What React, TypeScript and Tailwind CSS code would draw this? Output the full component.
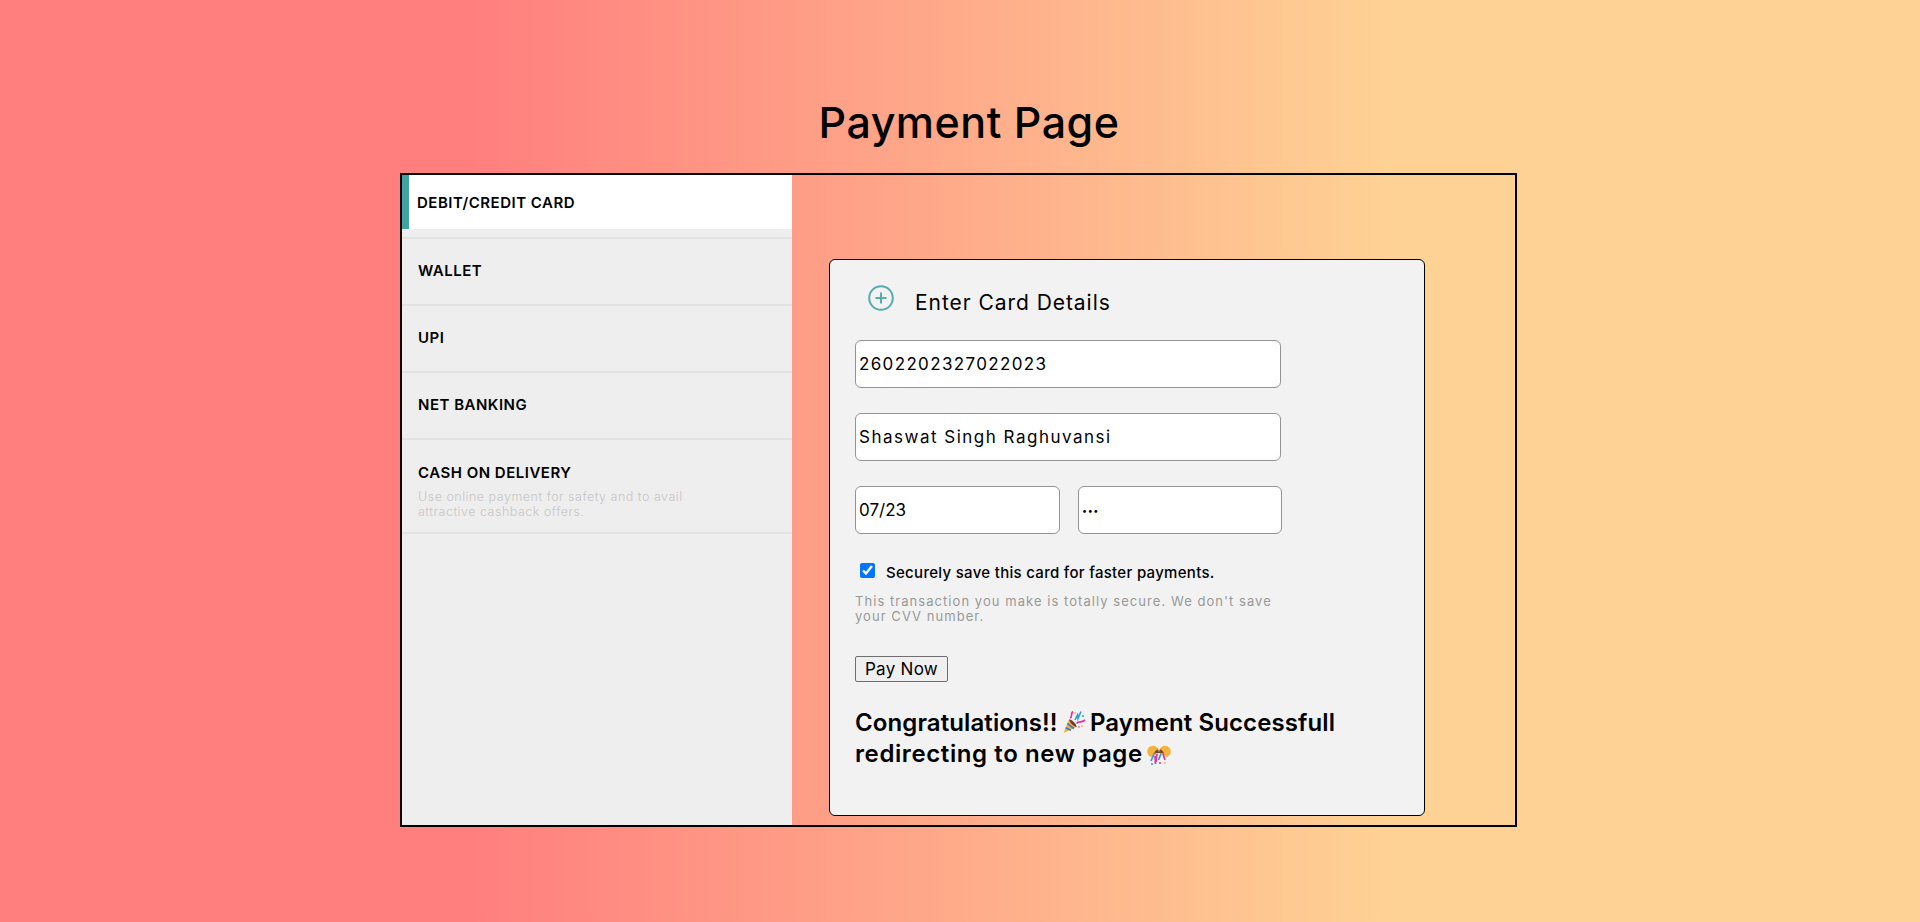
import React from "react";

const font = "font-['Inter','Liberation_Sans',sans-serif]";

function Item({ label, note, h }: { label: string; note?: boolean; h: string }) {
  return (
    <div className={`${h} pl-[16px] border-b-2 border-[#e2e2e2] flex flex-col shrink-0 ${note ? "pt-[24px]" : "pt-[23px]"}`}>
      <div className="text-[15px] leading-[18px] font-semibold text-black tracking-[0.5px]">{label}</div>
      {note && (
        <p className="mt-[7px] w-[295px] text-[12.5px] leading-[15px] font-light text-[#c9c5c8] tracking-[0.5px]">
          Use online payment for safety and to avail attractive cashback offers.
        </p>
      )}
    </div>
  );
}

function PartyPopper() {
  return (
    <svg className="inline-block align-[-4px] -mx-[2px]" width="24" height="25" viewBox="0 0 24 25" role="img" aria-label="party popper">
      <path d="M1.5 23 L7 9.5 L14.5 17 Z" fill="#f2b33d" />
      <path d="M3.6 17.8 L9 20.2 M5.4 13.4 L11.8 18.6" stroke="#3f78c9" strokeWidth="1.8" />
      <path d="M7 9.5 C9 8.5 15 14 14.5 17 C12 17 8 13 7 9.5 Z" fill="#6b4226" />
      <path d="M8 8 C11 7 8 4 11 1.5" stroke="#ec2f9b" strokeWidth="1.7" fill="none" />
      <path d="M13 10 L15.5 5 L16 8.5 L19 1.5" stroke="#1e9fe0" strokeWidth="1.6" fill="none" />
      <path d="M14.5 13.5 C17 10.5 19 13.5 23 10" stroke="#ec2f9b" strokeWidth="1.7" fill="none" />
      <circle cx="13" cy="3" r="1" fill="#f7c23c" />
      <circle cx="21" cy="6" r="1" fill="#1e9fe0" />
      <circle cx="20" cy="16" r="1" fill="#f7c23c" />
      <circle cx="17" cy="17" r="0.8" fill="#ec2f9b" />
    </svg>
  );
}

function ConfettiBall() {
  return (
    <svg className="inline-block align-[-5px] -mx-[2px]" width="24" height="25" viewBox="0 0 24 25" role="img" aria-label="confetti ball">
      <path d="M11.5 11.5 A5.8 5.8 0 1 0 4 15 Z" fill="#f5b23e" />
      <path d="M12.5 11.5 A5.8 5.8 0 1 1 20 15 Z" fill="#f5b23e" />
      <path d="M6.5 12 Q11.5 3.5 12 11.5 Q12.5 3.5 17.5 12 Q12 9.5 6.5 12 Z" fill="#7b4a2c" />
      <path d="M7 12 L4 19 M14 11.5 L11.5 18" stroke="#1e9fe0" strokeWidth="1.7" fill="none" />
      <path d="M10 12 L9 20 M16 12 L18 18 M8 14 L8.5 22" stroke="#ec2f9b" strokeWidth="1.7" fill="none" />
      <circle cx="5" cy="22" r="1" fill="#1e9fe0" />
      <circle cx="13" cy="21" r="1" fill="#ec2f9b" />
      <circle cx="18" cy="21" r="1" fill="#f7c23c" />
    </svg>
  );
}

const inputCls =
  "h-[48px] rounded-[6px] border border-[#949494] bg-white pl-[3px] text-black outline-none";

export default function App() {
  return (
    <div className={`${font} w-full h-[922px] overflow-hidden bg-[linear-gradient(90deg,#ff7e7e_24%,#fed194_72%)] flex flex-col items-center`}>
      <h1 className="ml-[18px] mt-[97px] h-[53px] mb-[23px] text-[43px] leading-[50px] font-medium text-black tracking-[0.5px]">Payment Page</h1>
      <div className="ml-[-3px] w-[1117px] h-[654px] border-2 border-black flex">
        <aside className="w-[390px] bg-[#eeeeee] flex flex-col">
          <div className="h-[54px] bg-white border-l-[7px] border-[#41a3a0] pl-[8px] pt-[2px] flex items-center text-[15px] font-semibold text-black tracking-[0.5px] shrink-0">
            DEBIT/CREDIT CARD
          </div>
          <div className="h-[10px] border-b-2 border-[#e2e2e2] shrink-0" />
          <Item label="WALLET" h="h-[67px]" />
          <Item label="UPI" h="h-[67px]" />
          <Item label="NET BANKING" h="h-[67px]" />
          <Item label="CASH ON DELIVERY" note h="h-[94px]" />
        </aside>
        <main className="flex-1 pl-[37px] pt-[84px]">
          <section className="w-[596px] h-[557px] rounded-[6px] border border-black bg-[#f2f2f2] pl-[25px]">
            <div className="flex h-[80px]">
              <svg className="ml-[13px] mt-[25px] text-[#55adab]" width="26" height="26" viewBox="0 0 26 26" fill="none" stroke="currentColor">
                <circle cx="13" cy="13" r="11.8" strokeWidth="2" />
                <path d="M13 7.5v11M7.5 13h11" strokeWidth="2" />
              </svg>
              <h2 className="ml-[21px] mt-[29px] text-[21px] leading-[28px] font-normal text-black tracking-[0.95px]">Enter Card Details</h2>
            </div>
            <input readOnly value="2602202327022023" className={`${inputCls} text-[17px] w-[426px] block tracking-[1.35px]`} />
            <input readOnly value="Shaswat Singh Raghuvansi" className={`${inputCls} text-[17px] w-[426px] block mt-[25px] tracking-[1.5px]`} />
            <div className="flex mt-[25px] gap-[18px]">
              <input readOnly value="07/23" className={`${inputCls} text-[17px] w-[205px]`} />
              <input readOnly type="password" value="123" className={`${inputCls} text-[9px] w-[204px] tracking-[0.6px]`} />
            </div>
            <label className="flex items-start mt-[29px] ml-[5px]">
              <input type="checkbox" readOnly checked className="w-[15px] h-[15px]" />
              <span className="ml-[11px] text-[15px] leading-[20px] font-medium text-black tracking-[0.3px]">Securely save this card for faster payments.</span>
            </label>
            <p className="mt-[11px] w-[424px] text-[13px] leading-[15px] text-[#999999] tracking-[1.05px]">
              This transaction you make is totally secure. We don't save your CVV number.
            </p>
            <button className="block mt-[32px] w-[93px] h-[26px] border border-[#6f6f6f] rounded-[2px] bg-[#efefef] text-[17px] leading-[22px] text-black tracking-[0.3px]">
              Pay Now
            </button>
            <p className="mt-[25px] w-[520px] text-[24px] leading-[31px] font-semibold text-black tracking-[0.1px]">
              Congratulations!! <PartyPopper /> Payment Successfull <span className="tracking-[0.6px]">redirecting to new page</span> <ConfettiBall />
            </p>
          </section>
        </main>
      </div>
    </div>
  );
}
